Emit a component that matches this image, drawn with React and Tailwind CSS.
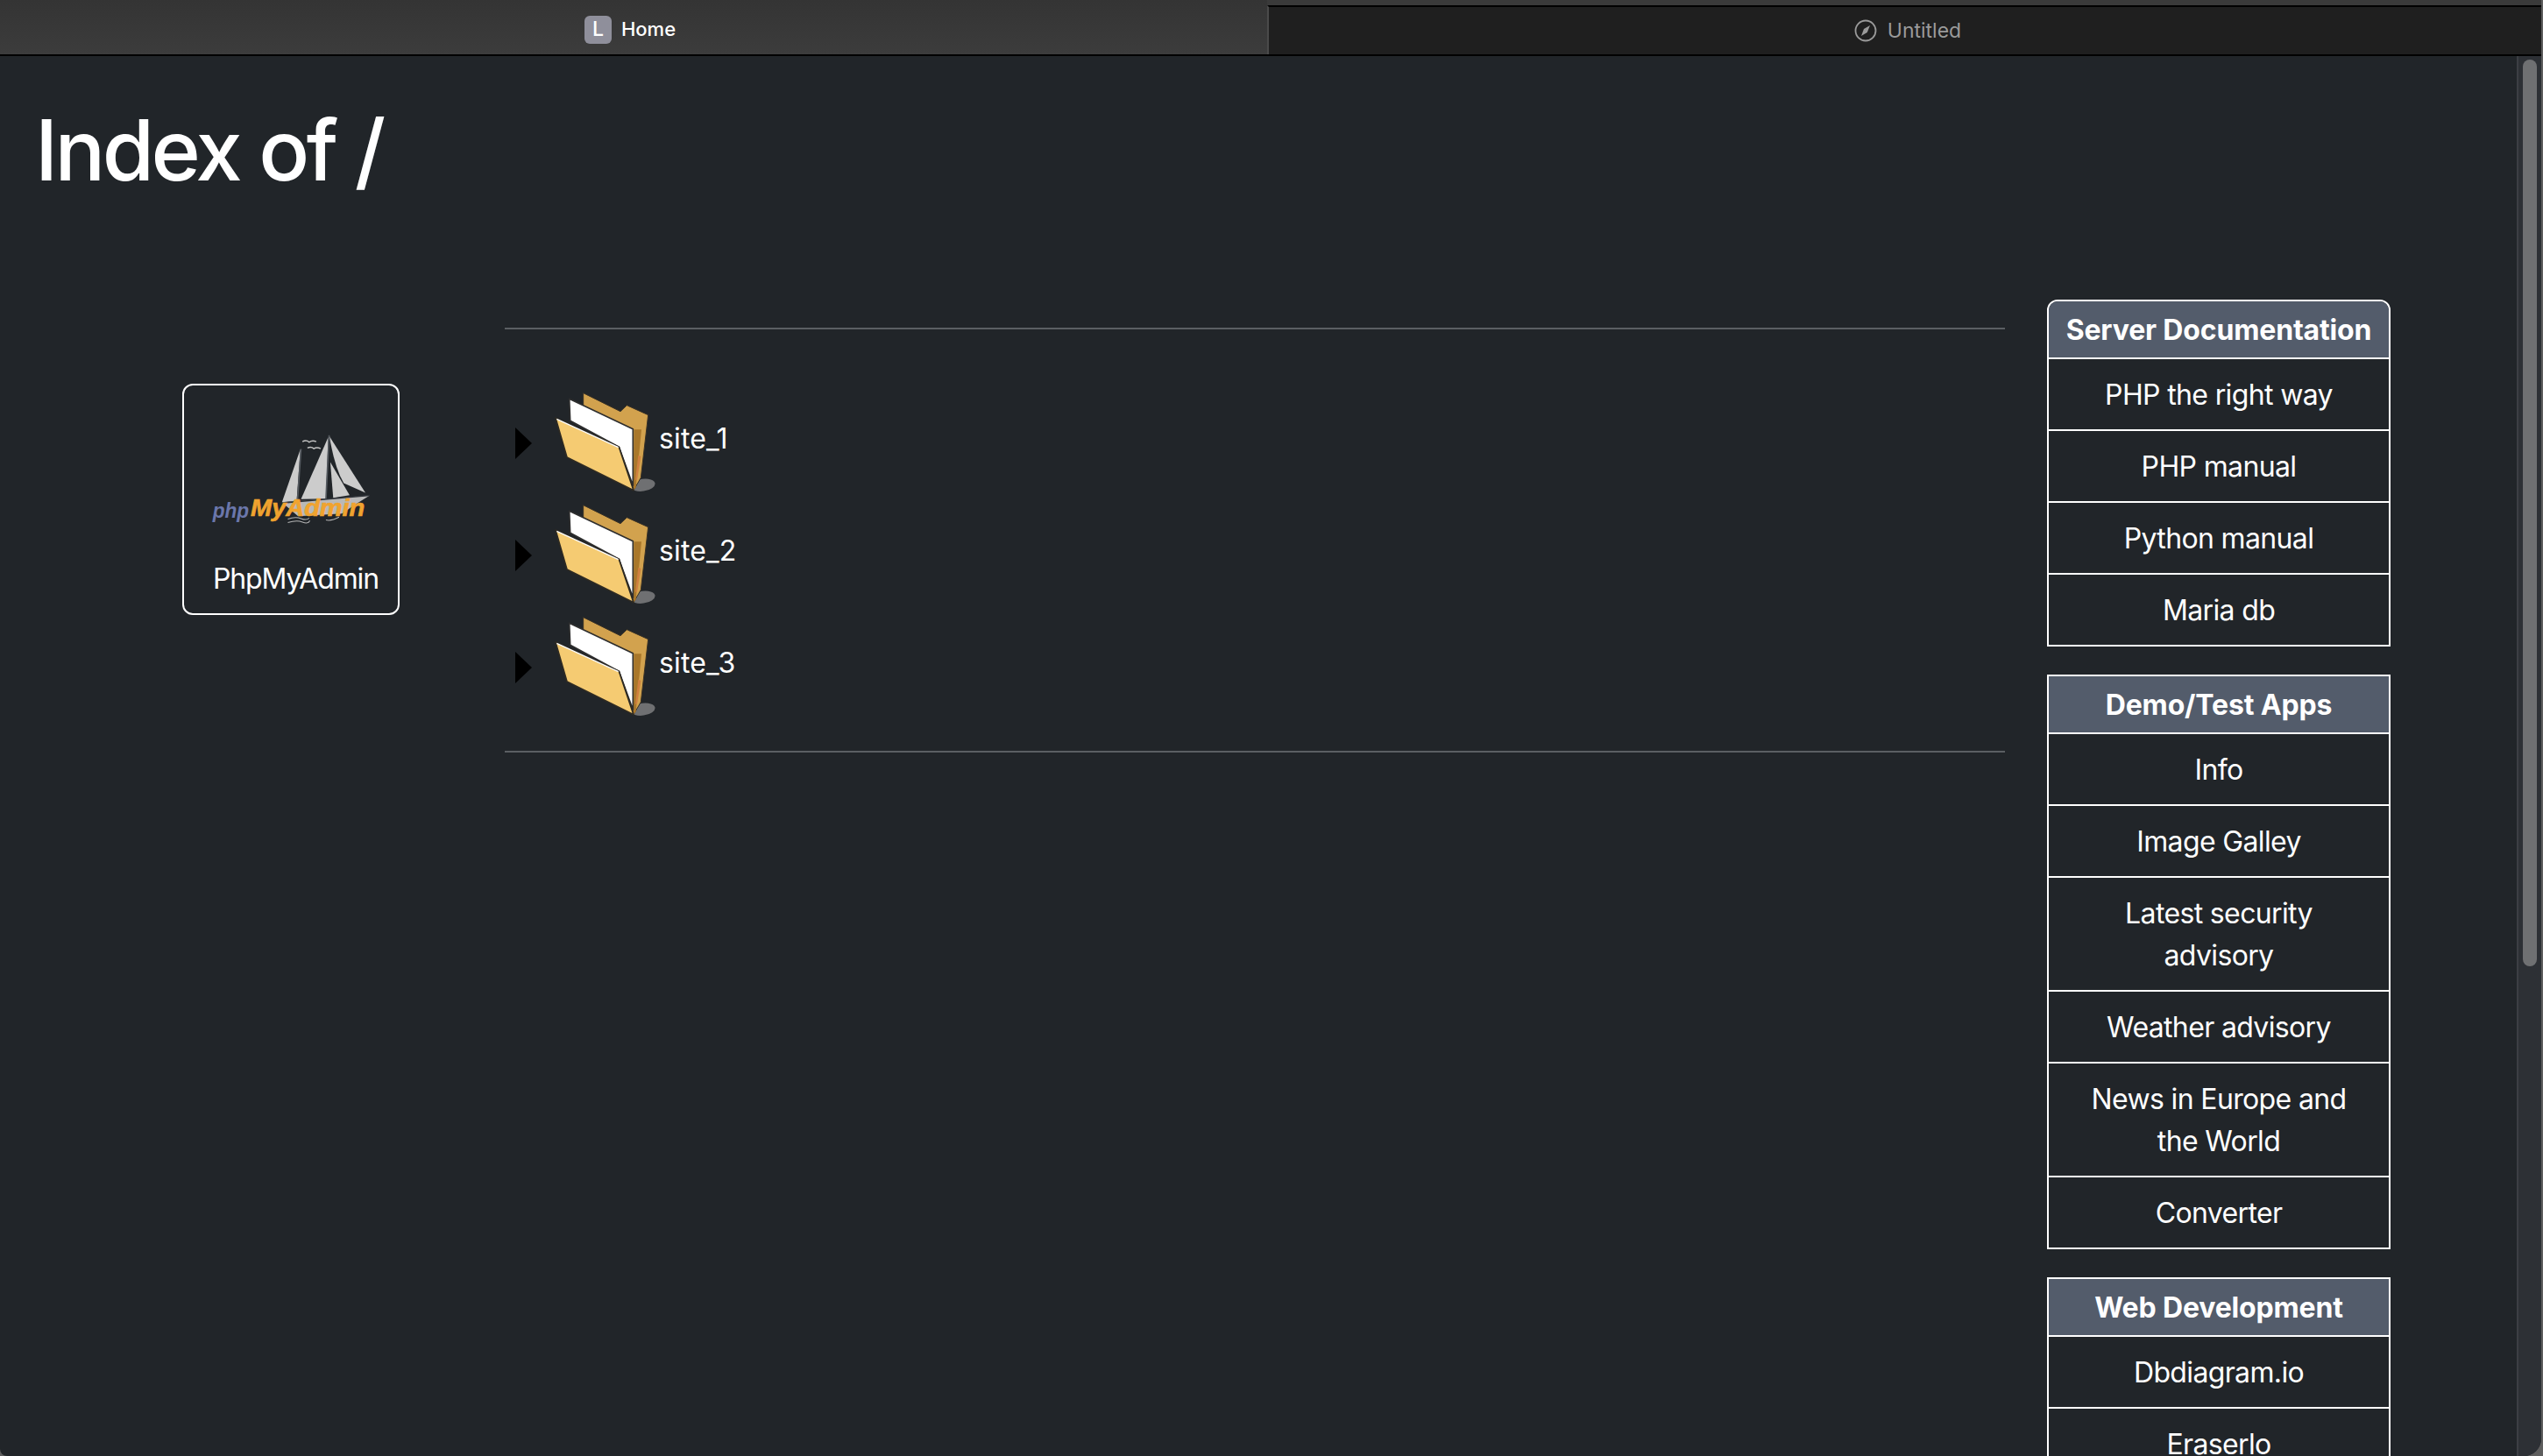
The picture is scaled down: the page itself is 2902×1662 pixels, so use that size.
import React from 'react';

const sidebarGroups = [
  {
    title: 'Server Documentation',
    items: ['PHP the right way', 'PHP manual', 'Python manual', 'Maria db'],
  },
  {
    title: 'Demo/Test Apps',
    items: ['Info', 'Image Galley', 'Latest security advisory', 'Weather advisory', 'News in Europe and the World', 'Converter'],
  },
  {
    title: 'Web Development',
    items: ['Dbdiagram.io', 'Eraserlo'],
  },
];

function PhpMyAdminLogo() {
  return (
    <svg viewBox="150 220 560 320" className="w-[187px] h-[107px] block ml-[-3px]">
      <path d="M458 275L445 452L395 457Z" fill="#cccccc" />
      <path d="M553 235L545 445L460 447Z" fill="#cccccc" />
      <path d="M560 320L570 442L626 433Z" fill="#cccccc" />
      <path d="M557 232L680 425L606 392Q575 340 557 232Z" fill="#cccccc" />
      <path d="M448 450L460 275M545 450L556 228" stroke="#555a60" strokeWidth="5" fill="none" />
      <path d="M395 458L695 434L640 468L600 496L450 505Z" fill="#b9b9b9" />
      <path d="M395 460L695 434" stroke="#30343a" strokeWidth="4" />
      <path d="M465 250Q478 243 488 252Q498 244 512 250M482 272Q494 265 504 274Q514 267 527 274" stroke="#c4c4c4" strokeWidth="4.5" fill="none" />
      <path d="M415 515Q440 505 460 513T488 511M415 527Q445 517 465 525T490 520M545 518Q565 522 590 508" stroke="#b5b5b5" strokeWidth="3" fill="none" />
      <text x="158" y="510" textLength="124" lengthAdjust="spacingAndGlyphs" fontFamily="Liberation Sans, sans-serif" fontStyle="italic" fontWeight="700" fontSize="72" fill="#6b77ab">php</text>
      <text x="288" y="505" textLength="390" lengthAdjust="spacingAndGlyphs" fontFamily="Liberation Sans, sans-serif" fontStyle="italic" fontWeight="700" fontSize="82" fill="#f0a32f" stroke="#f0a32f" strokeWidth="2">MyAdmin</text>
    </svg>
  );
}

function FolderIcon() {
  return (
    <svg viewBox="190 50 345 345" className="w-[115px] h-[115px] block shrink-0 mb-[4px]">
      <ellipse cx="492" cy="370" rx="42" ry="21" fill="#6f7072" transform="rotate(-8 492 370)" />
      <path d="M288 55L415 118L437 97L510 130L485 345L460 388L440 300L288 150Z" fill="#d2a24e" stroke="#3a3226" strokeWidth="3" />
      <path d="M462 180L487 180L468 378L460 388Z" fill="#a9772a" />
      <path d="M476 268L485 272L472 352L466 352Z" fill="#cf7f3f" />
      <path d="M240 75L458 178L458 372L410 240L243 150Z" fill="#ffffff" stroke="#2e2e2e" strokeWidth="5" strokeLinejoin="round" />
      <path d="M193 140L410 240L460 388L232 275Z" fill="#f5cb72" stroke="#2e2a22" strokeWidth="5" strokeLinejoin="round" />
      <path d="M197 144L408 241" stroke="#ffffff" strokeWidth="4" />
    </svg>
  );
}

function CompassIcon() {
  return (
    <svg viewBox="0 0 26 26" className="w-[26px] h-[26px]">
      <circle cx="13" cy="13" r="11.5" fill="none" stroke="#9a9a9a" strokeWidth="1.8" />
      <path d="M18 7L14.8 15L8 19L11 11Z" fill="#9a9a9a" />
    </svg>
  );
}

function SiteRow({ name }) {
  return (
    <div className="flex items-center h-[128px]">
      <span className="w-0 h-0 border-y-[18px] border-y-transparent border-l-[19px] border-l-black ml-[12px] mr-[26px]" />
      <FolderIcon />
      <span className="ml-[4px] mb-[10px] text-[32px] leading-[48px] tracking-[0.005em] text-white">{name}</span>
    </div>
  );
}

function LinkGroup({ group, first }) {
  return (
    <div className={first ? 'border-2 border-white rounded-t-xl overflow-hidden' : 'border-2 border-white'}>
      <div className="bg-[#535c6b] pt-[9px] pb-[7px] text-center text-[32px] leading-[48px] font-bold tracking-[-0.005em] text-white">
        {group.title}
      </div>
      {group.items.map((item) => (
        <div key={item} className="border-t-2 border-white pt-[17px] pb-[15px] px-6 text-center text-[32px] leading-[48px] tracking-[-0.02em] text-white">
          {item}
        </div>
      ))}
    </div>
  );
}

export default function App() {
  return (
    <div className="h-screen overflow-hidden bg-[#5e5e5e] pr-[2px] font-['Inter',sans-serif]">
      <div className="h-full overflow-hidden flex flex-col bg-[#212529] rounded-br-[20px] rounded-bl-[8px]">
        <div className="flex h-[64px] shrink-0 border-b-2 border-black bg-[#3a3a3a]">
          <div className="w-[1446px] flex items-center justify-center gap-[11px] pr-[8px] pt-[5px] bg-gradient-to-b from-[#343434] to-[#3c3c3c]">
            <span className="w-[31px] h-[32px] rounded-[6px] bg-[#8f8f9b] flex items-center justify-center text-white text-[23px] font-medium">L</span>
            <span className="text-white text-[22px] font-medium">Home</span>
          </div>
          <div className="flex-1 mt-[6px] border-t-2 border-l-2 border-t-black border-l-[#4a4a4a] bg-[#1f1f1f] flex items-center justify-center gap-[12px] pl-[6px]">
            <CompassIcon />
            <span className="text-[#9a9a9a] text-[23px]">Untitled</span>
          </div>
        </div>
        <div className="flex-1 min-h-0 flex">
          <div className="flex-1 min-w-0 overflow-hidden">
            <h1 className="pl-[40px] pt-[49px] text-[96px] leading-[116px] tracking-[-0.037em] text-white font-medium">Index of /</h1>
            <div className="flex mt-[113px] items-start">
              <div className="w-[576px] shrink-0 pl-[208px] pt-[96px]">
                <div className="w-[248px] h-[264px] border-2 border-white rounded-xl flex flex-col pl-[33px] pt-[54px]">
                  <PhpMyAdminLogo />
                  <div className="mt-[36px] text-[32px] leading-[48px] tracking-[-0.035em] text-white">PhpMyAdmin</div>
                </div>
              </div>
              <div className="w-[1712px] shrink-0 pt-[32px]">
                <div className="border-t-2 border-[#5b5f63]" />
                <div className="pt-[66px] pb-[31px]">
                  <SiteRow name="site_1" />
                  <SiteRow name="site_2" />
                  <SiteRow name="site_3" />
                </div>
                <div className="border-t-2 border-[#5b5f63]" />
              </div>
              <div className="w-[392px] shrink-0 ml-[48px] flex flex-col gap-8">
                {sidebarGroups.map((group, i) => (
                  <LinkGroup key={group.title} group={group} first={i === 0} />
                ))}
              </div>
            </div>
          </div>
          <div className="w-[28px] shrink-0 bg-[#2d3035] border-l-2 border-[#3c3f44] pl-[5px] pt-[4px]">
            <div className="w-[16px] h-[1035px] rounded-full bg-[#6f7072]" />
          </div>
        </div>
      </div>
    </div>
  );
}
